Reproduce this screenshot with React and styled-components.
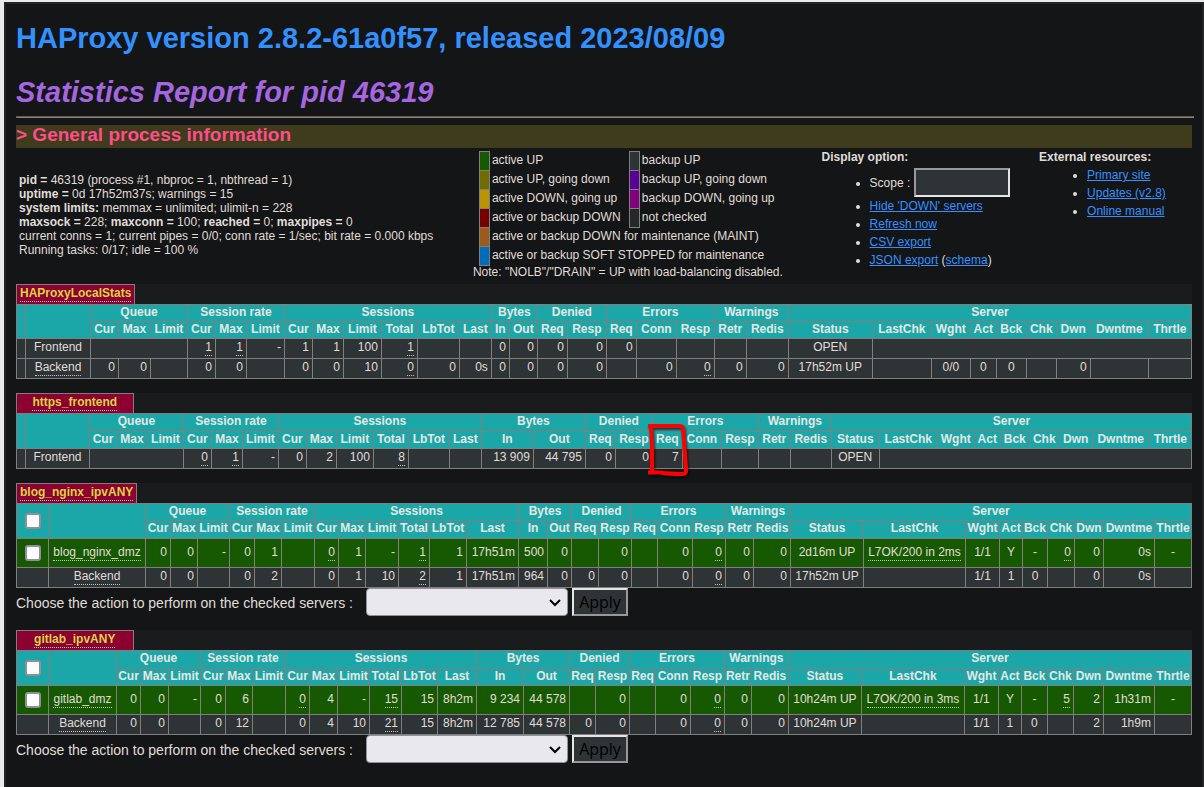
import React from 'react'
import styled, { createGlobalStyle } from 'styled-components'

const GlobalStyle = createGlobalStyle`
    * {
        box-sizing: border-box;
    }
    body {
        margin: 0;
        background-color: #e9eaec;
        color: #e0ddd9;
        font-family: "Liberation Sans", Arial, sans-serif;
        font-size: 12px;
        line-height: 14px;
    }
    a {
        color: #3391ff;
    }
`
const Page = styled.main`
    min-height: calc(100vh - 2px);
    margin: 2px 0 0 4px;
    padding: 0 8px 0 10px;
    background-color: #131516;
    border: 2px solid #212325;
    border-bottom: none;
`
const Heading = styled.h1`
    margin: 0;
    padding-top: 18px;
    font-size: 29px;
    line-height: 32px;
    color: #3391ff;
`
const SubHeading = styled.h2`
    margin: 0;
    padding: 22px 0 8px;
    font-size: 29px;
    line-height: 32px;
    font-style: italic;
    color: #a566e0;
`
const Rule = styled.hr`
    margin: 0 0 7px;
    border: 1px solid;
    border-color: #5f5a50 #8c8473 #8c8473 #5f5a50;
`
const Content = styled.div`
    margin-right: 2px;
`
const SectionTitle = styled.h3`
    margin: 0;
    padding-bottom: 3px;
    font-size: 19px;
    line-height: 20px;
    color: #ff4d88;
    background-color: #3f3b1d;
`
const Info = styled.section`
    display: flex;
    height: 136px;
`
const ProcessInfo = styled.p`
    width: 38%;
    margin: 0;
    padding: 25px 3px 0;
`
const LegendBox = styled.div`
    width: 30.5%;
    padding: 3px 0 0 10px;
    line-height: 12px;
    white-space: nowrap;
`
const LegendTable = styled.table`
    width: 304px;
    margin-left: 6px;
    border-collapse: collapse;
    td {
        height: 19px;
        padding: 0 2px 2px;
    }
`
const Swatch = styled.td`
    width: 10px;
    background-color: ${(p) => p.$color};
    border: 1px solid #7f7f7f;
`
const Options = styled.div`
    width: ${(p) => p.$width};
    padding-top: 2px;
    ul {
        margin: 2px 0 0;
        padding-left: 48px;
    }
    li {
        line-height: 18px;
    }
`
const ScopeInput = styled.input`
    width: 96px;
    height: 29px;
    margin: 2px 0 0;
    padding: 1px 2px;
    color: #e0ddd9;
    background-color: #2e3335;
    border: 2px solid;
    border-color: #97979c #e6e6e6 #e6e6e6 #97979c;
`
const ProxyBlock = styled.section`
    position: relative;
    margin-bottom: 14px;
`
const TitleStrip = styled.div`
    display: flex;
    height: 20px;
    background-color: #1a1b1d;
`
const ProxyName = styled.h4`
    min-width: 10%;
    margin: 0;
    padding: 1px 3px 0;
    color: #dcd53e;
    background-color: #8c0032;
    border: 1px solid #7f7f7f;
    border-bottom: none;
    font-size: 12px;
    text-align: center;
`
const Tip = styled.u`
    padding-bottom: 1px;
    text-decoration: none;
    border-bottom: 1px dotted #c8c4bd;
`
const StatsTable = styled.table`
    width: 100%;
    table-layout: fixed;
    border-collapse: collapse;
    th, td {
        border: 1px solid #7f7f7f;
        white-space: nowrap;
    }
`
const Col = styled.col`
    width: ${(p) => p.$share}%;
`
const HeadRow = styled.tr`
    height: ${(p) => p.$height}px;
    background-color: #1ba6a8;
    th {
        padding: 0 0 2px;
        color: #e8e6e3;
        vertical-align: top;
    }
    th[rowspan] {
        vertical-align: middle;
    }
`
const BodyRow = styled.tr`
    height: ${(p) => (p.$active ? 29 : 20)}px;
    background-color: ${(p) => (p.$active ? '#175900' : '#2e3335')};
    td {
        padding: ${(p) => (p.$active ? '0 3px 2px' : '0 3px 4px')};
    }
`
const Cell = styled.td`
    text-align: ${(p) => p.$align};
`
const Check = styled.input`
    appearance: none;
    display: block;
    width: 16px;
    height: 16px;
    margin: 2px auto 0;
    background-color: white;
    border: 2px solid #8f8f9d;
    border-radius: 3px;
`
const ActionForm = styled.form`
    display: flex;
    align-items: center;
    height: 28px;
    font-size: 14px;
    label {
        min-width: 350px;
        padding-top: 2px;
    }
`
const SelectWrapper = styled.div`
    position: relative;
    width: 202px;
    height: 28px;
    margin-right: 4px;
    select {
        appearance: none;
        width: 100%;
        height: 100%;
        background-color: #e9e9ed;
        border: 1px solid #8f8f9d;
        border-radius: 4px;
    }
    svg {
        position: absolute;
        top: 11px;
        right: 7px;
        pointer-events: none;
    }
`
const ApplyButton = styled.button`
    width: 56px;
    height: 28px;
    padding: 0;
    color: black;
    background-color: #2e3335;
    border: 2px solid;
    border-color: #e6e6e6 #97979c #97979c #e6e6e6;
    font-family: "Open Sans", sans-serif;
    font-size: 16px;
    line-height: 24px;
`
const Marker = styled.svg`
    position: absolute;
    top: 28px;
    left: 53.5%;
    width: 48px;
    height: 56px;
    pointer-events: none;
    filter: drop-shadow(1px 2px 1px rgba(0, 0, 0, 0.6));
`

const legend = [
    ['#175900', 'active UP', '#2e3335', 'backup UP'],
    ['#706c00', 'active UP, going down', '#580094', 'backup UP, going down'],
    ['#ba9500', 'active DOWN, going up', '#800080', 'backup DOWN, going up'],
    ['#760000', 'active or backup DOWN', '#24282a', 'not checked'],
    ['#9b5c1a', 'active or backup DOWN for maintenance (MAINT)'],
    ['#006bb8', 'active or backup SOFT STOPPED for maintenance'],
]

const groups = [
    ['Queue', ['Cur', 'Max', 'Limit']],
    ['Session rate', ['Cur', 'Max', 'Limit']],
    ['Sessions', ['Cur', 'Max', 'Limit', 'Total', 'LbTot', 'Last']],
    ['Bytes', ['In', 'Out']],
    ['Denied', ['Req', 'Resp']],
    ['Errors', ['Req', 'Conn', 'Resp']],
    ['Warnings', ['Retr', 'Redis']],
    ['Server', ['Status', 'LastChk', 'Wght', 'Act', 'Bck', 'Chk', 'Dwn', 'Dwntme', 'Thrtle']],
]

// columns whose values are centered: Status .. Bck and Thrtle
const centered = [21, 22, 23, 24, 25, 29]

const span = (n) => ({ span: n })
const tip = (text) => ({ tip: text })

const proxies = [
    {
        name: 'HAProxyLocalStats',
        head: [17, 17],
        cols: [9, 65, 28, 32, 37, 28, 31, 38, 28, 31, 38, 36, 42, 32, 18, 28, 30, 39, 30, 40, 38, 32, 42, 84, 59, 39, 26, 30, 30, 34, 58, 43],
        rows: [
            { name: 'Frontend', cells: [span(3), tip('1'), tip('1'), '-', '1', '1', '100', tip('1'), '', '', '0', '0', '0', '0', '0', '', '', '', '', 'OPEN', span(8)] },
            { name: tip('Backend'), cells: ['0', '0', '', '0', '0', '', '0', '0', '10', tip('0'), '0', '0s', '0', '0', '0', '0', '', '0', tip('0'), '0', '0', '17h52m UP', '', '0/0', '0', '0', '', '0', '', ''] },
        ],
    },
    {
        name: 'https_frontend',
        head: [18, 17],
        marked: true,
        cols: [9, 64, 27, 31, 36, 28, 31, 36, 28, 30, 37, 35, 41, 32, 52, 52, 30, 37, 30, 39, 37, 32, 41, 48, 58, 37, 26, 29, 30, 33, 57, 42],
        rows: [
            { name: 'Frontend', cells: [span(3), tip('0'), tip('1'), '-', '0', '2', '100', tip('8'), '', '', '13 909', '44 795', '0', '0', '7', '', '', '', '', 'OPEN', span(8)] },
        ],
    },
    {
        name: 'blog_nginx_ipvANY',
        head: [17, 18],
        admin: true,
        cols: [32, 97, 25, 27, 32, 25, 27, 33, 24, 27, 33, 31, 37, 52, 29, 24, 27, 33, 26, 35, 33, 28, 37, 73, 102, 34, 23, 25, 27, 29, 51, 37],
        rows: [
            { name: tip('blog_nginx_dmz'), active: true, cells: ['0', '0', '-', '0', '1', '', tip('0'), '1', '-', tip('1'), '1', '17h51m', '500', '0', '', '0', '', '0', tip('0'), '0', '0', '2d16m UP', tip('L7OK/200 in 2ms'), '1/1', 'Y', '-', tip('0'), '0', '0s', '-'] },
            { name: tip('Backend'), cells: ['0', '0', '', '0', '2', '', '0', '1', '10', tip('2'), '1', '17h51m', '964', '0', '0', '0', '', '0', tip('0'), '0', '0', '17h52m UP', '', '1/1', '1', '0', '', '0', '0s', ''] },
        ],
    },
    {
        name: 'gitlab_ipvANY',
        head: [18, 17],
        admin: true,
        cols: [32, 68, 24, 28, 32, 25, 27, 33, 24, 28, 32, 32, 36, 39, 47, 46, 26, 34, 26, 35, 34, 27, 37, 73, 103, 34, 23, 26, 26, 30, 51, 37],
        rows: [
            { name: tip('gitlab_dmz'), active: true, cells: ['0', '0', '-', '0', '6', '', tip('0'), '4', '-', tip('15'), '15', '8h2m', '9 234', '44 578', '', '0', '', '0', tip('0'), '0', '0', '10h24m UP', tip('L7OK/200 in 3ms'), '1/1', 'Y', '-', tip('5'), '2', '1h31m', '-'] },
            { name: tip('Backend'), cells: ['0', '0', '', '0', '12', '', '0', '4', '10', tip('21'), '15', '8h2m', '12 785', '44 578', '0', '0', '', '0', tip('0'), '0', '0', '10h24m UP', '', '1/1', '1', '0', '', '2', '1h9m', ''] },
        ],
    },
]

const renderValue = (value) => (value.tip ? <Tip>{value.tip}</Tip> : value)

function StatCells({ cells }) {
    let column = 0
    return cells.map((cell, i) => {
        const align = centered.includes(column) ? 'center' : 'right'
        column += cell.span || 1
        if (cell.span) return <Cell key={i} colSpan={cell.span} />
        return <Cell key={i} $align={align}>{renderValue(cell)}</Cell>
    })
}

function Proxy({ proxy }) {
    const total = proxy.cols.reduce((sum, w) => sum + w, 0)
    return (
        <ProxyBlock>
            <TitleStrip>
                <ProxyName><Tip>{proxy.name}</Tip></ProxyName>
            </TitleStrip>
            <StatsTable>
                <colgroup>
                    {proxy.cols.map((w, i) => <Col key={i} $share={(w / total) * 100} />)}
                </colgroup>
                <thead>
                    <HeadRow $height={proxy.head[0]}>
                        <th rowSpan={2}>{proxy.admin && <Check type="checkbox" aria-label={`All servers of ${proxy.name}`} />}</th>
                        <th rowSpan={2}></th>
                        {groups.map(([title, names]) => <th key={title} colSpan={names.length}>{title}</th>)}
                    </HeadRow>
                    <HeadRow $height={proxy.head[1]}>
                        {groups.map(([title, names]) => names.map((name) => <th key={title + name}>{name}</th>))}
                    </HeadRow>
                </thead>
                <tbody>
                    {proxy.rows.map((row, i) => (
                        <BodyRow key={i} $active={row.active}>
                            <Cell>{row.active && <Check type="checkbox" aria-label={row.name.tip} />}</Cell>
                            <Cell $align="center">{renderValue(row.name)}</Cell>
                            <StatCells cells={row.cells} />
                        </BodyRow>
                    ))}
                </tbody>
            </StatsTable>
            {proxy.marked && (
                <Marker viewBox="0 0 48 56" fill="none" stroke="#fe0000" strokeWidth="4" strokeLinejoin="round" strokeLinecap="square">
                    <path d="M5 51.5 L16 51.5 Q22 53 38 53 Q42 53 41 48 L39 20 L38 8 Q38 5 34 5 L5 5 M6 7 L7 20 L7 49" />
                </Marker>
            )}
            {proxy.admin && (
                <ActionForm onSubmit={(e) => e.preventDefault()}>
                    <label htmlFor={`action-${proxy.name}`}>Choose the action to perform on the checked servers :</label>
                    <SelectWrapper>
                        <select id={`action-${proxy.name}`}>
                            <option value=""></option>
                        </select>
                        <svg width="12" height="8" fill="none" stroke="black" strokeWidth="2">
                            <path d="M1 1 L6 6 L11 1" />
                        </svg>
                    </SelectWrapper>
                    <ApplyButton type="submit">Apply</ApplyButton>
                </ActionForm>
            )}
        </ProxyBlock>
    )
}

function Legend() {
    return (
        <LegendBox>
            <LegendTable>
                <tbody>
                    {legend.map(([color, text, color2, text2]) => (
                        <tr key={text}>
                            <Swatch $color={color} />
                            <td colSpan={color2 ? 1 : 3}>{text}</td>
                            {color2 && <Swatch $color={color2} />}
                            {color2 && <td>{text2}</td>}
                        </tr>
                    ))}
                </tbody>
            </LegendTable>
            Note: "NOLB"/"DRAIN" = UP with load-balancing disabled.
        </LegendBox>
    )
}

function App() {
    return (
        <Page>
            <GlobalStyle />
            <Heading>HAProxy version 2.8.2-61a0f57, released 2023/08/09</Heading>
            <SubHeading>Statistics Report for pid 46319</SubHeading>
            <Rule />
            <Content>
                <SectionTitle>&gt; General process information</SectionTitle>
                <Info>
                    <ProcessInfo>
                        <b>pid = </b>46319 (process #1, nbproc = 1, nbthread = 1)<br />
                        <b>uptime = </b>0d 17h52m37s; warnings = 15<br />
                        <b>system limits:</b> memmax = unlimited; ulimit-n = 228<br />
                        <b>maxsock = </b>228; <b>maxconn = </b>100; <b>reached = </b>0; <b>maxpipes = </b>0<br />
                        current conns = 1; current pipes = 0/0; conn rate = 1/sec; bit rate = 0.000 kbps<br />
                        Running tasks: 0/17; idle = 100 %
                    </ProcessInfo>
                    <Legend />
                    <Options $width="18.5%">
                        <b>Display option:</b>
                        <ul>
                            <li>
                                <label htmlFor="scope">Scope : </label>
                                <ScopeInput id="scope" type="text" />
                            </li>
                            <li><a href="#hide">Hide 'DOWN' servers</a></li>
                            <li><a href="#refresh">Refresh now</a></li>
                            <li><a href="#csv">CSV export</a></li>
                            <li><a href="#json">JSON export</a> (<a href="#schema">schema</a>)</li>
                        </ul>
                    </Options>
                    <Options $width="13%">
                        <b>External resources:</b>
                        <ul>
                            <li><a href="#site">Primary site</a></li>
                            <li><a href="#updates">Updates (v2.8)</a></li>
                            <li><a href="#manual">Online manual</a></li>
                        </ul>
                    </Options>
                </Info>
                {proxies.map((proxy) => <Proxy key={proxy.name} proxy={proxy} />)}
            </Content>
        </Page>
    )
}

export default App
